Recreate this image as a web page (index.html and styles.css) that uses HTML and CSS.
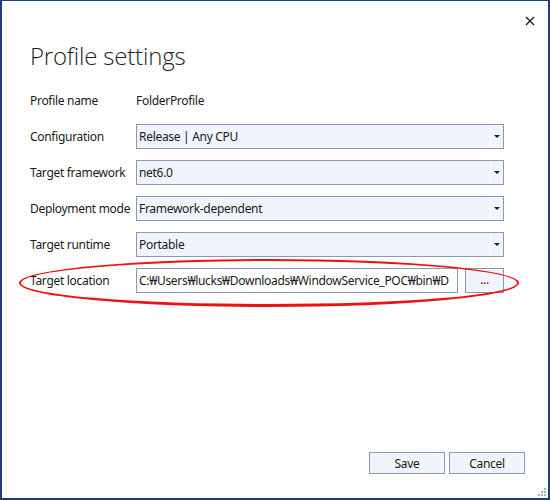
FILE: index.html
```html
<!DOCTYPE html>
<html>
<head>
<meta charset="utf-8">
<link rel="stylesheet" href="styles.css">
</head>
<body>
<div class="window">
  <div class="titlebar">
    <svg class="close" width="10" height="10" viewBox="0 0 10 10"><path d="M1 1 L9 9 M9 1 L1 9" stroke="#1e1e1e" stroke-width="1.4" fill="none"/></svg>
  </div>
  <h1 class="title">Profile settings</h1>
  <div class="form">
    <div class="label">Profile name</div>
    <div class="value">FolderProfile</div>

    <div class="label">Configuration</div>
    <div class="combo"><span class="combo-text">Release | Any CPU</span><span class="combo-btn"><span class="arrow"></span></span></div>

    <div class="label">Target framework</div>
    <div class="combo"><span class="combo-text">net6.0</span><span class="combo-btn"><span class="arrow"></span></span></div>

    <div class="label">Deployment mode</div>
    <div class="combo"><span class="combo-text">Framework-dependent</span><span class="combo-btn"><span class="arrow"></span></span></div>

    <div class="label">Target runtime</div>
    <div class="combo"><span class="combo-text">Portable</span><span class="combo-btn"><span class="arrow"></span></span></div>

    <div class="label">Target location</div>
    <div class="location">
      <div class="textbox">C:₩Users₩lucks₩Downloads₩WindowService_POC₩bin₩D</div>
      <div class="browse">...</div>
    </div>
  </div>
  <div class="spacer"></div>
  <div class="footer">
    <div class="btn">Save</div>
    <div class="btn">Cancel</div>
  </div>
  <div class="highlight"></div>
  <svg class="grip" width="10" height="10" viewBox="0 0 10 10">
    <rect x="7" y="1" width="2" height="2" fill="#a7b1c6"/>
    <rect x="4" y="4" width="2" height="2" fill="#a7b1c6"/>
    <rect x="7" y="4" width="2" height="2" fill="#a7b1c6"/>
    <rect x="1" y="7" width="2" height="2" fill="#a7b1c6"/>
    <rect x="4" y="7" width="2" height="2" fill="#a7b1c6"/>
    <rect x="7" y="7" width="2" height="2" fill="#a7b1c6"/>
  </svg>
</div>
</body>
</html>
```

FILE: styles.css
```css
html, body {
  margin: 0;
  padding: 0;
  background: #ffffff;
}

.window {
  position: relative;
  width: 550px;
  height: 500px;
  box-sizing: border-box;
  border: 2px solid #1f3c7a;
  border-top-width: 1px;
  background: #ffffff;
  display: flex;
  flex-direction: column;
  font-family: "Noto Sans", "Noto Sans CJK KR", sans-serif;
  font-size: 12px;
  letter-spacing: -0.3px;
  color: #1a1a1a;
}

.titlebar {
  height: 38px;
  display: flex;
  justify-content: flex-end;
  align-items: center;
  padding-right: 13px;
}

.close {
  display: block;
  margin-top: 2px;
}

.title {
  margin: 0 0 15px 28px;
  font-family: "Open Sans", "Noto Sans", sans-serif;
  font-weight: 300;
  font-size: 24px;
  line-height: 34px;
  letter-spacing: -0.2px;
  color: #1e1e1e;
}

.form {
  display: grid;
  grid-template-columns: 106px 1fr;
  grid-auto-rows: 25px;
  row-gap: 11px;
  margin-left: 28px;
  width: 474px;
}

.label, .value {
  display: flex;
  align-items: center;
  white-space: nowrap;
}

.combo {
  display: flex;
  box-sizing: border-box;
  border: 1px solid #8d99b2;
  background: #f0f4fc;
}

.combo-text {
  flex: 1;
  display: flex;
  align-items: center;
  padding-left: 2px;
}

.combo-btn {
  width: 12px;
  border-left: 1px solid #ffffff;
  display: flex;
  align-items: center;
  justify-content: center;
}

.arrow {
  width: 0;
  height: 0;
  border-left: 3px solid transparent;
  border-right: 3px solid transparent;
  border-top: 3px solid #1e1e1e;
}

.location {
  display: flex;
  gap: 7px;
}

.textbox {
  width: 322px;
  box-sizing: border-box;
  border: 1px solid #8d99b2;
  background: #ffffff;
  padding: 0 2px;
  display: flex;
  align-items: center;
  white-space: nowrap;
  overflow: hidden;
}

.browse {
  flex: 1;
  box-sizing: border-box;
  border: 1px solid #8d99b2;
  background: #f0f4fc;
  display: flex;
  align-items: center;
  justify-content: center;
  padding-bottom: 2px;
}

.spacer {
  flex: 1;
}

.footer {
  display: flex;
  justify-content: flex-end;
  gap: 4px;
  padding-right: 23px;
  padding-bottom: 24px;
}

.btn {
  width: 76px;
  height: 22px;
  box-sizing: border-box;
  border: 1px solid #8d99b2;
  background: #f0f4fc;
  display: flex;
  align-items: center;
  justify-content: center;
}

.highlight {
  position: absolute;
  left: 17px;
  top: 258px;
  width: 500px;
  height: 48px;
  box-sizing: border-box;
  border: 2px solid #ee1111;
  border-bottom-width: 3px;
  border-radius: 50%;
  pointer-events: none;
}

.grip {
  position: absolute;
  right: 1px;
  bottom: 1px;
}
```
